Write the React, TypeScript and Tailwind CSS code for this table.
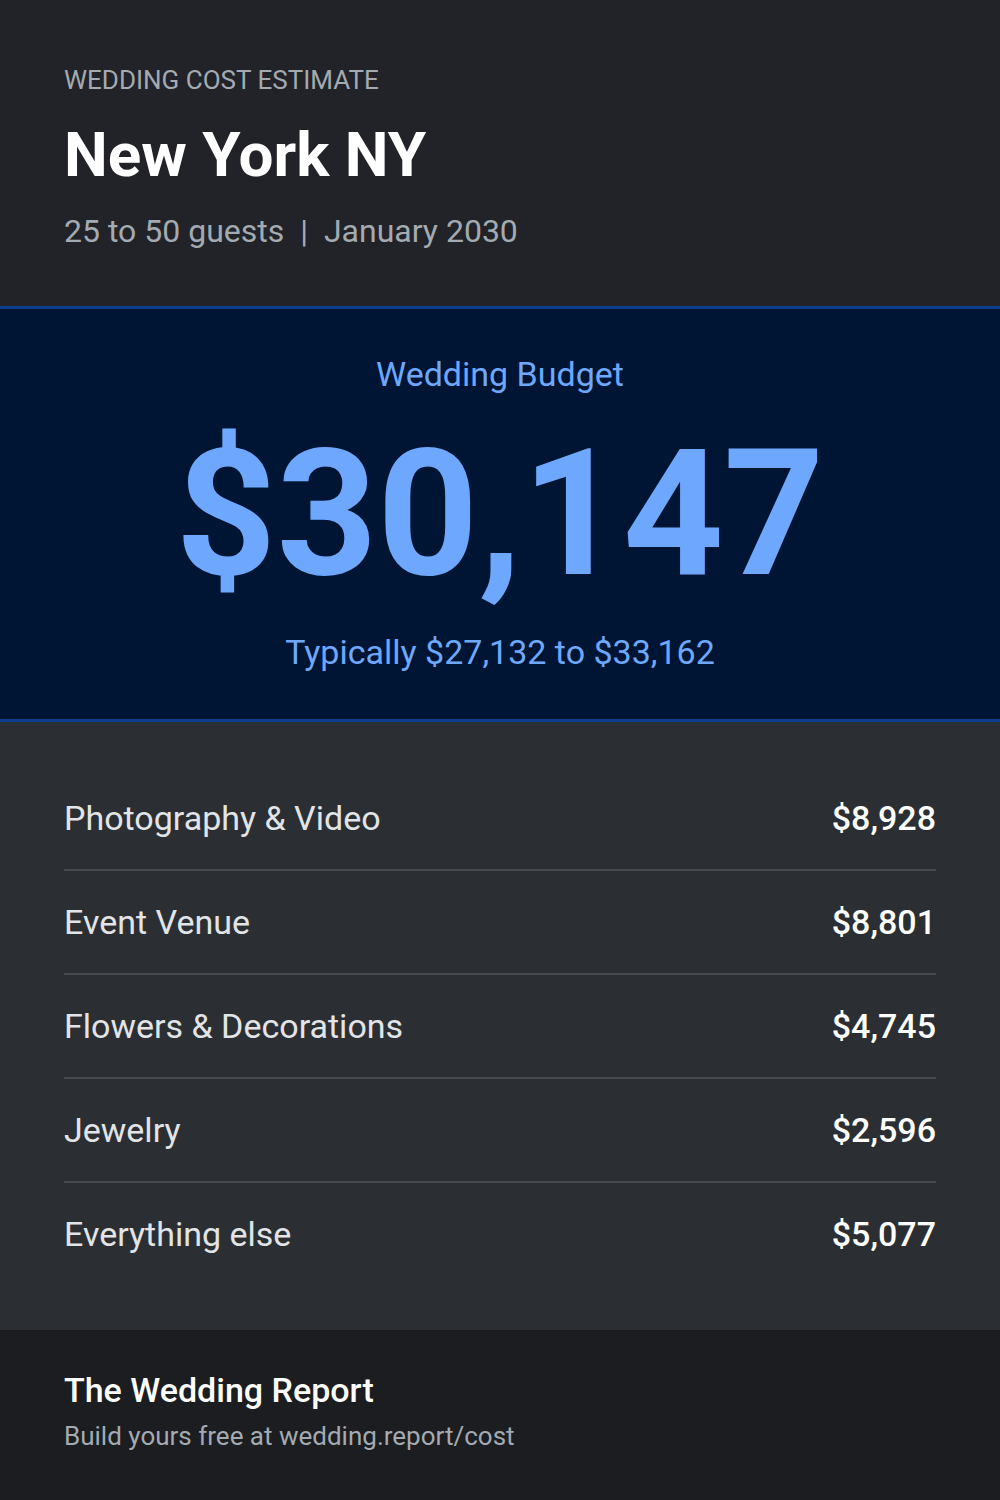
const rows = [
  { label: 'Photography & Video', value: '$8,928' },
  { label: 'Event Venue', value: '$8,801' },
  { label: 'Flowers & Decorations', value: '$4,745' },
  { label: 'Jewelry', value: '$2,596' },
  { label: 'Everything else', value: '$5,077' },
];

export default function App() {
  return (
    <div className="w-[1000px] min-h-[1500px] bg-[#1b1d20] font-['Roboto',sans-serif]">
      {/* Header */}
      <div className="bg-[#212328] px-16 pt-[65px] pb-[55px]">
        <div className="text-[26px] leading-[30px] text-[#a4aab2] uppercase">Wedding Cost Estimate</div>
        <h1 className="mt-6 text-[62px] leading-[72px] font-bold text-white">New York NY</h1>
        <div className="mt-5 text-[32px] leading-[40px] text-[#a4aab2]">
          25 to 50 guests <span className="mx-2">|</span> January 2030
        </div>
      </div>

      {/* Budget */}
      <div className="bg-[#001533] border-y-[3px] border-[#0d3f91] pt-[45px] pb-[47px] flex flex-col items-center">
        <div className="text-[34px] leading-[40px] text-[#6ea8fe]">Wedding Budget</div>
        <div className="mt-8 text-[176px] leading-[176px] font-bold text-[#6ea8fe]">$30,147</div>
        <div className="mt-[30px] text-[34px] leading-[40px] text-[#6ea8fe]">Typically $27,132 to $33,162</div>
      </div>

      {/* Breakdown */}
      <div className="bg-[#2b2f33] px-16 py-[45px]">
        {rows.map((r, i) => (
          <div
            key={r.label}
            className={
              i < rows.length - 1
                ? 'h-[104px] flex items-center justify-between border-b-2 border-[#464b52]'
                : 'h-[102px] flex items-center justify-between'
            }
          >
            <span className="text-[34px] text-[#e2e4e7]">{r.label}</span>
            <span className="text-[34px] font-medium text-white">{r.value}</span>
          </div>
        ))}
      </div>

      {/* Footer */}
      <div className="bg-[#1b1d20] px-16 pt-10 pb-12">
        <div className="text-[34px] leading-[40px] font-medium text-white">The Wedding Report</div>
        <div className="mt-[10px] text-[26px] leading-[32px] text-[#a4aab2]">Build yours free at wedding.report/cost</div>
      </div>
    </div>
  );
}
